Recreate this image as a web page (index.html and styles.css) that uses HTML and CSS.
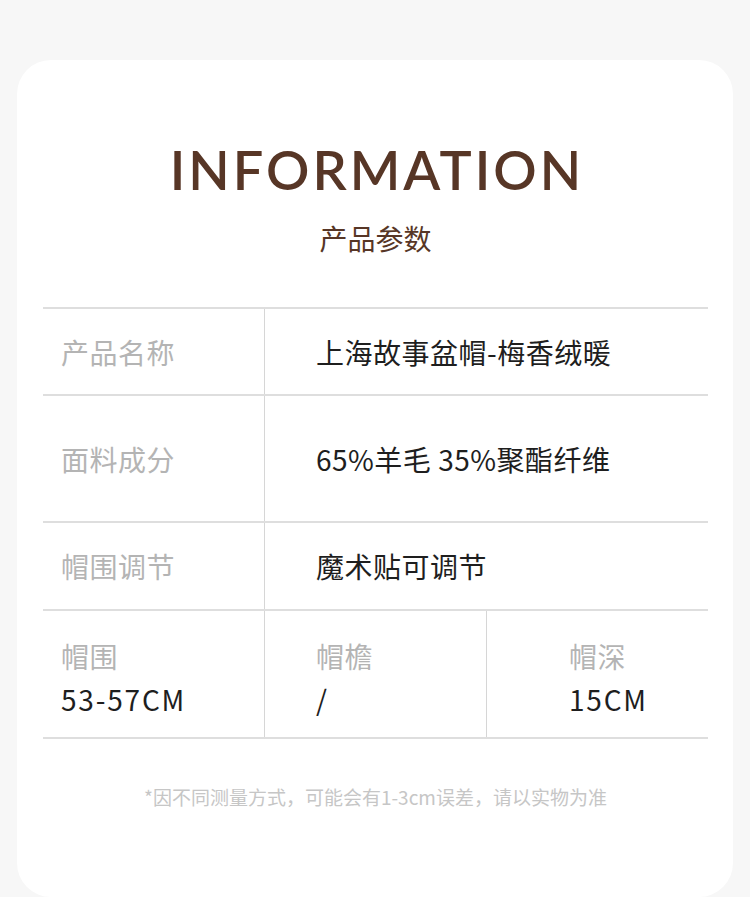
FILE: index.html
```html
<!DOCTYPE html>
<html lang="zh-CN">
<head>
<meta charset="utf-8">
<link rel="stylesheet" href="styles.css">
</head>
<body>
<div class="card">
  <h1 class="title">INFORMATION</h1>
  <div class="subtitle">产品参数</div>
  <div class="table">
    <div class="row row-1">
      <div class="cell label">产品名称</div>
      <div class="cell value">上海故事盆帽-梅香绒暖</div>
    </div>
    <div class="row row-2">
      <div class="cell label">面料成分</div>
      <div class="cell value">65%羊毛 35%聚酯纤维</div>
    </div>
    <div class="row row-3">
      <div class="cell label">帽围调节</div>
      <div class="cell value">魔术贴可调节</div>
    </div>
    <div class="row row-4">
      <div class="cell stack c1">
        <div class="label">帽围</div>
        <div class="value">53-57CM</div>
      </div>
      <div class="cell stack c2">
        <div class="label">帽檐</div>
        <div class="value">/</div>
      </div>
      <div class="cell stack c3">
        <div class="label">帽深</div>
        <div class="value">15CM</div>
      </div>
    </div>
  </div>
  <p class="note">*因不同测量方式，可能会有1-3cm误差，请以实物为准</p>
</div>
</body>
</html>
```

FILE: styles.css
```css
html, body {
  margin: 0;
  padding: 0;
  background: #f7f7f7;
}
body {
  font-family: "Noto Sans CJK SC", "Noto Sans", sans-serif;
  width: 750px;
  height: 897px;
  overflow: hidden;
}
.card {
  margin: 60px 17px 0;
  height: 837px;
  background: #ffffff;
  border-radius: 34px;
  padding: 0 25px 0 26px;
  box-sizing: border-box;
  overflow: hidden;
}
.title {
  margin: 0;
  padding-top: 82px;
  text-align: center;
  font-family: "Lato", "Noto Sans", sans-serif;
  font-weight: 600;
  font-size: 54px;
  line-height: 56px;
  letter-spacing: 3px;
  text-indent: 3px;
  color: #573626;
}
.subtitle {
  margin-top: 21px;
  text-align: center;
  font-size: 28px;
  line-height: 38px;
  color: #573626;
}
.table {
  margin-top: 50px;
  border-top: 2px solid #dedede;
}
.row {
  display: grid;
  grid-template-columns: 221px 1fr;
  border-bottom: 2px solid #dedede;
}
.row-1 { height: 85px; }
.row-2 { height: 125px; }
.row-3 { height: 86px; }
.row-4 { height: 126px; grid-template-columns: 221px 222px 1fr; }
.cell {
  display: flex;
  align-items: center;
  font-size: 28px;
  letter-spacing: 0.5px;
}
.cell + .cell {
  border-left: 1px solid #d6d6d6;
}
.label {
  color: #b4b4b4;
  padding-left: 18px;
}
.value {
  color: #1e1e1e;
  padding-left: 51px;
}
.stack {
  flex-direction: column;
  align-items: flex-start;
  justify-content: flex-start;
  padding-top: 26px;
  gap: 5px;
}
.stack .label,
.stack .value {
  line-height: 38px;
}
.stack .value {
  letter-spacing: 1.8px;
}
.c1 .label, .c1 .value { padding-left: 18px; }
.c2 .label, .c2 .value { padding-left: 51px; }
.c3 .label, .c3 .value { padding-left: 82px; }
.note {
  margin: 44px 0 0;
  text-align: center;
  font-size: 19px;
  line-height: 28px;
  color: #c6c6c6;
}
```
